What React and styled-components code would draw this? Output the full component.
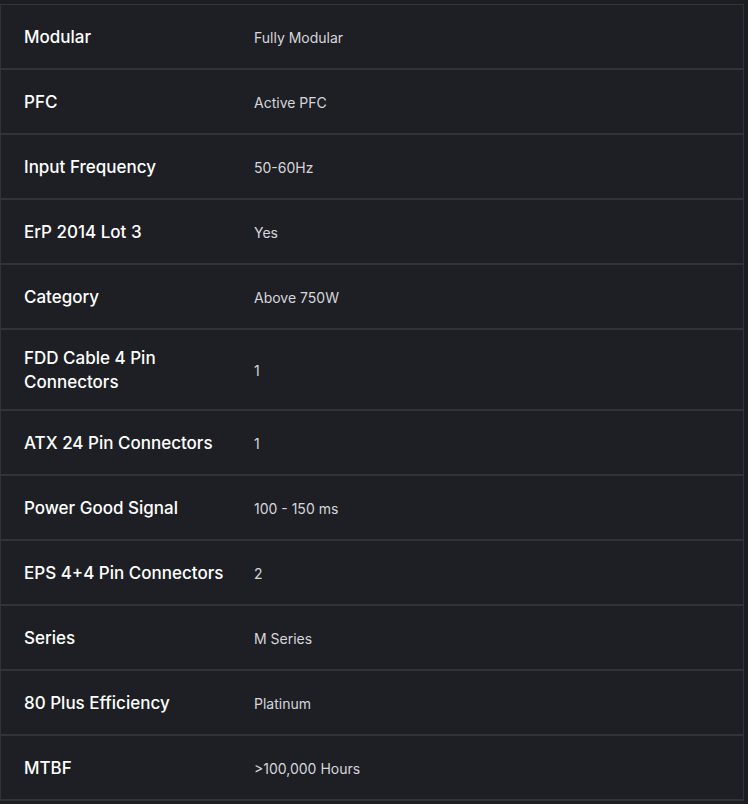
import React from "react";
import styled, { createGlobalStyle } from "styled-components";

const GlobalStyle = createGlobalStyle`
  html, body {
    margin: 0;
    padding: 0;
    background: #1c1d21;
  }
  body {
    font-family: Inter, "Noto Sans", "Liberation Sans", sans-serif;
  }
`;

const Page = styled.div`
  padding-top: 4px;
  width: 744px;
`;

const SpecTable = styled.div`
  background: #1e1f24;
  border: 1px solid #33323c;
  border-bottom: none;
`;

const Row = styled.div`
  display: grid;
  grid-template-columns: 230px 1fr;
  align-items: center;
  min-height: 65px;
  border-bottom: 2px solid #33323c;
  box-sizing: border-box;
`;

const Label = styled.div`
  padding: 17px 0 15px 23px;
  color: #ffffff;
  font-size: 17px;
  font-weight: 500;
  line-height: 23.5px;
`;

const Value = styled.div`
  padding: 17px 24px 15px 23px;
  color: #d6d6db;
  font-size: 14px;
  font-weight: 400;
  line-height: 20px;
`;

const specs = [
  ["Modular", "Fully Modular"],
  ["PFC", "Active PFC"],
  ["Input Frequency", "50-60Hz"],
  ["ErP 2014 Lot 3", "Yes"],
  ["Category", "Above 750W"],
  ["FDD Cable 4 Pin Connectors", "1"],
  ["ATX 24 Pin Connectors", "1"],
  ["Power Good Signal", "100 - 150 ms"],
  ["EPS 4+4 Pin Connectors", "2"],
  ["Series", "M Series"],
  ["80 Plus Efficiency", "Platinum"],
  ["MTBF", ">100,000 Hours"],
];

const App = () => {
  return (
    <>
      <GlobalStyle />
      <Page>
        <SpecTable>
          {specs.map(([label, value]) => (
            <Row key={label}>
              <Label>{label}</Label>
              <Value>{value}</Value>
            </Row>
          ))}
        </SpecTable>
      </Page>
    </>
  );
};

export default App;
